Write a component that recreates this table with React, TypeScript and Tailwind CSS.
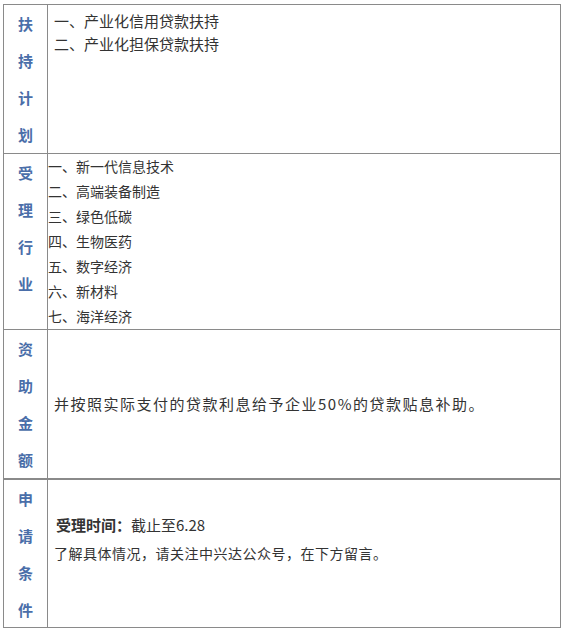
const font = { fontFamily: '"Noto Sans CJK SC", "Noto Sans", sans-serif' };

function Label({ chars }: { chars: string }) {
  return (
    <div className="w-[44px] shrink-0 border-r border-[#8a8a8a] text-center text-[15px] font-bold leading-[37px] text-[#4a6ea9]">
      {chars.split("").map((c) => (
        <div key={c}>{c}</div>
      ))}
    </div>
  );
}

const industries = [
  "一、新一代信息技术",
  "二、高端装备制造",
  "三、绿色低碳",
  "四、生物医药",
  "五、数字经济",
  "六、新材料",
  "七、海洋经济",
];

export default function App() {
  return (
    <div className="min-h-[631px] w-[566px] bg-white pt-[4px] pl-[3px]" style={font}>
      <div className="w-[558px] border border-[#8a8a8a] text-[#333]">
        <div className="flex h-[149px] border-b border-[#8a8a8a]">
          <Label chars="扶持计划" />
          <div className="pl-[6px] pt-[4px] text-[15px] leading-[23px]">
            <p>一、产业化信用贷款扶持</p>
            <p>二、产业化担保贷款扶持</p>
          </div>
        </div>

        <div className="flex h-[176px] border-b border-[#8a8a8a]">
          <Label chars="受理行业" />
          <div className="text-[14px] leading-[25px]">
            {industries.map((t) => (
              <p key={t}>{t}</p>
            ))}
          </div>
        </div>

        <div className="flex h-[150px] border-b-2 border-[#8a8a8a]">
          <Label chars="资助金额" />
          <div className="flex items-center pl-[6px] text-[15px] tracking-[1.5px]">
            <p>并按照实际支付的贷款利息给予企业50%的贷款贴息补助。</p>
          </div>
        </div>

        <div className="flex h-[147px]">
          <Label chars="申请条件" />
          <div className="pl-[6px] pt-[31px] leading-[28px]">
            <p className="pl-[2px] text-[15px]">
              <span className="font-bold">受理时间：</span>截止至6.28
            </p>
            <p className="text-[14px] tracking-[0.5px]">了解具体情况，请关注中兴达公众号，在下方留言。</p>
          </div>
        </div>
      </div>
    </div>
  );
}
